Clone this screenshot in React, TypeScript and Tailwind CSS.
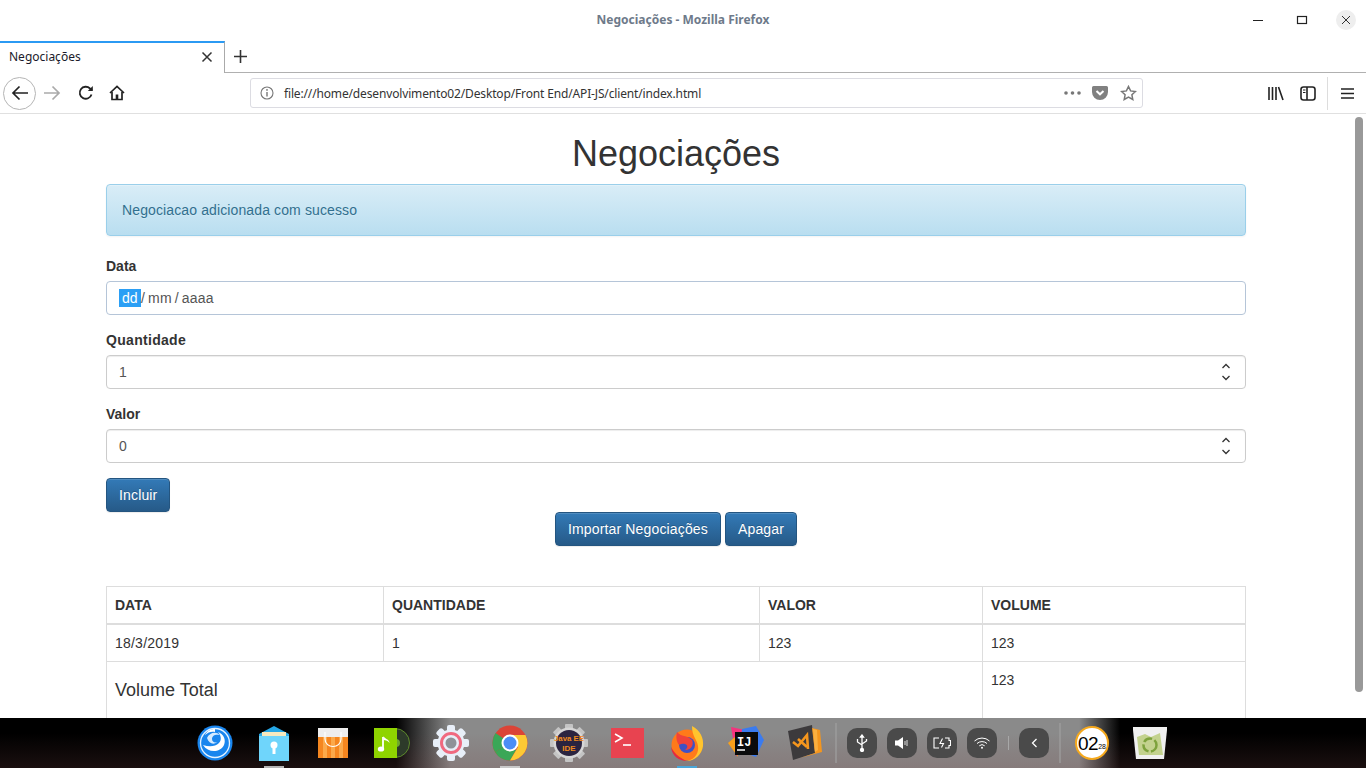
import React from "react";

function Stepper() {
	return (
		<svg width="10" height="18" viewBox="0 0 10 18" className="mr-[2px]" fill="none" stroke="#333" strokeWidth="1.3">
			<path d="M1.5 5l3.5-3.5L8.5 5" />
			<path d="M1.5 13l3.5 3.5L8.5 13" />
		</svg>
	);
}

function NumberField({ label, value, labelClass }: { label: string; value: string; labelClass?: string }) {
	return (
		<div className="mb-[15px]">
			<label className={`block mb-[5px] h-5 leading-5 font-bold text-[#333] ${labelClass ?? ""}`}>{label}</label>
			<div className="flex h-[34px] items-center justify-between rounded-[4px] border border-[#ccc] bg-white pl-3 pr-3 text-[#555] shadow-[inset_0_1px_1px_rgba(0,0,0,0.075)]">
				<span>{value}</span>
				<Stepper />
			</div>
		</div>
	);
}

function BlueButton({ children }: { children: React.ReactNode }) {
	return (
		<button className="h-[34px] rounded-[4px] border border-[#245580] bg-gradient-to-b from-[#337ab7] to-[#265a88] px-3 tracking-[0.15px] text-white [text-shadow:0_-1px_0_rgba(0,0,0,0.2)] shadow-[inset_0_1px_0_rgba(255,255,255,0.15),0_1px_1px_rgba(0,0,0,0.075)]">
			{children}
		</button>
	);
}

function TitleBar() {
	return (
		<div className="relative flex h-[41px] shrink-0 items-center justify-center bg-white font-['Noto_Sans',sans-serif] text-[12px] font-bold text-[#6e7a8a]">
			<span className="-mt-[2px]">Negociações - Mozilla Firefox</span>
			<div className="absolute right-[10px] top-[10px] flex items-center">
				<svg width="12" height="12" viewBox="0 0 12 12" className="mr-[32px]"><path d="M1 6.5h10" stroke="#222" strokeWidth="1" /></svg>
				<svg width="12" height="12" viewBox="0 0 12 12" className="mr-[28px]"><rect x="1.5" y="2.5" width="9" height="7" fill="none" stroke="#222" strokeWidth="1.2" /></svg>
				<div className="flex h-5 w-5 items-center justify-center rounded-full bg-[#eeeeee]">
					<svg width="10" height="10" viewBox="0 0 10 10"><path d="M1 1l8 8M9 1l-8 8" stroke="#333" strokeWidth="1" /></svg>
				</div>
			</div>
		</div>
	);
}

function TabStrip() {
	return (
		<div className="flex h-[32px] shrink-0 bg-white font-['Noto_Sans',sans-serif]">
			<div className="flex h-[32px] w-[225px] items-center justify-between border-r border-[#aaa] border-t-[2px] border-t-[#2b9af3] pb-[2px] pl-[9px] pr-[11px] text-[12px] text-[#1a1a2a] shadow-[0_-1px_0_#aaaaaa]">
				<span>Negociações</span>
				<svg width="12" height="12" viewBox="0 0 12 12"><path d="M1.5 1.5l9 9M10.5 1.5l-9 9" stroke="#333" strokeWidth="1.5" /></svg>
			</div>
			<div className="flex flex-1 items-center border-b border-[#b0b0b0] pb-[1px] pl-[8px]">
				<svg width="15" height="15" viewBox="0 0 15 15"><path d="M7.5 1v13M1 7.5h13" stroke="#333" strokeWidth="1.6" /></svg>
			</div>
		</div>
	);
}

function Toolbar() {
	return (
		<div className="flex h-[41px] shrink-0 items-center border-b border-[#e0e0e0] bg-white pl-[3px] font-['Noto_Sans',sans-serif]">
			<div className="flex h-[33px] w-[33px] items-center justify-center rounded-full border border-[#b5b5b5]">
				<svg width="18" height="16" viewBox="0 0 18 16" fill="none" stroke="#222" strokeWidth="1.7"><path d="M17 8H2M8.5 1.5L2 8l6.5 6.5" /></svg>
			</div>
			<svg width="18" height="16" viewBox="0 0 18 16" fill="none" stroke="#aaa" strokeWidth="1.7" className="ml-[7px]"><path d="M1 8h15M9.5 1.5L16 8l-6.5 6.5" /></svg>
			<svg width="16" height="16" viewBox="0 0 16 16" fill="none" stroke="#222" strokeWidth="1.8" className="ml-[17px]">
				<path d="M13.5 9.5A6 6 0 1 1 12 3.5l2 1.5" />
				<path d="M14.8 1v5h-5" fill="#222" stroke="none" />
			</svg>
			<svg width="16" height="16" viewBox="0 0 16 16" className="ml-[15px]" fill="none" stroke="#222" strokeWidth="1.7">
				<path d="M1 8l7-6.5L15 8" />
				<path d="M3 7v7.5h10V7" />
				<rect x="6.7" y="9.5" width="2.6" height="5" fill="#222" stroke="none" />
			</svg>
			<div className="ml-[125px] flex h-[30px] w-[893px] items-center rounded-[3px] border border-[#dcdce2] pl-[9px] pr-[5px]">
				<svg width="14" height="14" viewBox="0 0 14 14" fill="none"><circle cx="7" cy="7" r="6" stroke="#777" strokeWidth="1.1" /><path d="M7 6v4.5" stroke="#777" strokeWidth="1.4" /><circle cx="7" cy="3.9" r="0.9" fill="#777" /></svg>
				<span className="ml-[10px] flex-1 pt-[1px] text-[12px] tracking-[-0.15px] text-[#333]">file:///home/desenvolvimento02/Desktop/Front End/API-JS/client/index.html</span>
				<svg width="17" height="4" viewBox="0 0 17 4" fill="#777"><circle cx="2" cy="2" r="1.8" /><circle cx="8.5" cy="2" r="1.8" /><circle cx="15" cy="2" r="1.8" /></svg>
				<svg width="16" height="14" viewBox="0 0 16 14" className="ml-[11px]"><path d="M1.5 0h13A1.5 1.5 0 0 1 16 1.5V6a8 8 0 0 1-16 0V1.500A1.500 1.500 0 0 1 1.500 0z" fill="#808080" /><path d="M4.500 5L8 8.300 11.500 5" fill="none" stroke="#fff" strokeWidth="2" /></svg>
				<svg width="17" height="16" viewBox="0 0 17 16" className="ml-[12px]" fill="none" stroke="#777" strokeWidth="1.500"><path d="M8.500 1.500l2.100 4.400 4.800.6-3.500 3.300.9 4.700-4.300-2.300-4.300 2.300.9-4.700L1.600 6.500l4.800-.6z" /></svg>
			</div>
			<svg width="16" height="15" viewBox="0 0 16 15" className="ml-[125px]" fill="none" stroke="#222" strokeWidth="1.600"><path d="M1 1v13M4.500 1v13M8 1v13M10.500 1l4.500 13" /></svg>
			<svg width="16" height="15" viewBox="0 0 16 15" className="ml-[16px]" fill="none" stroke="#222" strokeWidth="1.600">
				<rect x="1" y="1" width="14" height="13" rx="2.500" />
				<path d="M7 1v13" />
				<path d="M3 4h2.500M3 6.500h2.500" strokeWidth="1.200" />
			</svg>
			<div className="ml-[11px] h-[33px] w-px bg-[#dddddd]" />
			<svg width="13" height="13" viewBox="0 0 13 13" className="ml-[13px]" stroke="#222" strokeWidth="1.700"><path d="M0 2h13M0 6.500h13M0 11h13" /></svg>
		</div>
	);
}

function Page() {
	return (
		<div className="flex min-h-0 flex-1 overflow-hidden bg-white font-['Liberation_Sans',Arial,sans-serif] text-[14px] leading-5 text-[#333]">
			<div className="w-[1352px] shrink-0">
				<div className="mx-auto w-[1140px]">
					<h1 className="mb-[10px] mt-[20px] h-[40px] text-center text-[36px] leading-[40px] font-normal">Negociações</h1>
					<div className="mb-5 rounded-[4px] border border-[#9acfea] bg-gradient-to-b from-[#d9edf7] to-[#b9def0] p-[15px] tracking-[0.12px] text-[#31708f] [text-shadow:0_1px_0_rgba(255,255,255,0.2)] shadow-[inset_0_1px_0_rgba(255,255,255,0.25),0_1px_2px_rgba(0,0,0,0.05)]">
						Negociacao adicionada com sucesso
					</div>

					<div className="mb-[15px]">
						<label className="mb-[5px] block h-5 leading-5 font-bold">Data</label>
						<div className="flex h-[34px] items-center rounded-[4px] border border-[#b5c5d8] bg-white pl-3 text-[#555]">
							<span className="flex h-[18px] w-[22px] items-center bg-[#2b9ff5] pl-[3px] text-white">dd</span>
							<span className="tracking-[0.15px] [word-spacing:-1px]">/ mm / aaaa</span>
						</div>
					</div>
					<NumberField label="Quantidade" value="1" labelClass="tracking-[0.3px]" />
					<NumberField label="Valor" value="0" />
					<BlueButton>Incluir</BlueButton>

					<div className="flex justify-center gap-1">
						<BlueButton>Importar Negociações</BlueButton>
						<BlueButton>Apagar</BlueButton>
					</div>

					<table className="mt-[40px] w-[1139px] table-fixed border-collapse border border-[#ddd]">
						<colgroup>
							<col className="w-[277px]" />
							<col className="w-[376px]" />
							<col className="w-[223px]" />
							<col className="w-[263px]" />
						</colgroup>
						<thead>
							<tr className="h-[37px] text-left">
								<th className="border border-b-2 border-[#ddd] px-2 font-bold">DATA</th>
								<th className="border border-b-2 border-[#ddd] px-2 font-bold">QUANTIDADE</th>
								<th className="border border-b-2 border-[#ddd] px-2 font-bold">VALOR</th>
								<th className="border border-b-2 border-[#ddd] px-2 font-bold">VOLUME</th>
							</tr>
						</thead>
						<tbody>
							<tr className="h-[38px]">
								<td className="border border-[#ddd] px-2 tracking-[0.22px]">18/3/2019</td>
								<td className="border border-[#ddd] px-2">1</td>
								<td className="border border-[#ddd] px-2">123</td>
								<td className="border border-[#ddd] px-2">123</td>
							</tr>
							<tr className="h-[57px]">
								<td colSpan={3} className="border border-[#ddd] px-2 text-[18px]">Volume Total</td>
								<td className="border border-[#ddd] px-2 pb-[20px] pt-2 align-top">123</td>
							</tr>
						</tbody>
					</table>
				</div>
			</div>
			<div className="flex w-[14px] shrink-0 flex-col pl-[3px] pt-[3px]">
				<div className="h-[575px] w-[8px] rounded-[4px] bg-[#999]" />
			</div>
		</div>
	);
}

function DockSlot({ children, dot }: { children: React.ReactNode; dot?: string }) {
	return (
		<div className="relative flex h-[50px] w-[59px] shrink-0 items-center justify-center">
			{children}
			{dot && <div className={`absolute bottom-0 left-[20px] h-[2px] w-[20px] ${dot}`} />}
		</div>
	);
}

function TrayButton({ children }: { children: React.ReactNode }) {
	return <div className="flex h-[30px] w-[30px] items-center justify-center rounded-[10px] bg-[#4a4a4a]">{children}</div>;
}

function Dock() {
	return (
		<div className="flex h-[50px] shrink-0 items-center bg-[linear-gradient(180deg,transparent_30%,rgba(120,70,70,0.22)_100%),linear-gradient(90deg,#000_0,#000_29%,#8a8a8a_33%,#8a8a8a_79%,#000_82%,#000_100%)] pl-[185px]">
			<DockSlot>
				<svg width="36" height="36" viewBox="0 0 36 36">
					<circle cx="18" cy="18" r="17.500" fill="#1a86ee" />
					<circle cx="18" cy="18" r="14.500" fill="none" stroke="#e6f3ff" strokeWidth="1.300" />
					<path d="M6 20c5 8 17 8 21 0 2-5 0-11-6-13 3 3 4 8 1 11-4 4-10 4-16 2z" fill="#fff" />
					<path d="M10 13c2-5 9-7 13-3-4-1-8 0-8 4 0 3 3 4 5 3-3 3-8 2-10-4z" fill="#d6ebff" />
					<path d="M18 4c-4 0-8 2-10 6 3-3 7-4 10-3z" fill="#fff" />
				</svg>
			</DockSlot>
			<DockSlot dot="bg-[#b5b5b5]">
				<svg width="30" height="35" viewBox="0 0 30 35">
					<path d="M0 8L15 0l15 8v27H0z" fill="#25a7e6" />
					<path d="M3 6h24v6H3z" fill="#f6e9bf" />
					<path d="M0 10h30v25H0z" fill="#6fd5fb" />
					<circle cx="15" cy="19" r="3.500" fill="#fff" />
					<path d="M13.500 20h3v8h-3z" fill="#fff" />
				</svg>
			</DockSlot>
			<DockSlot>
				<svg width="30" height="30" viewBox="0 0 30 30">
					<rect width="30" height="30" fill="#f5861f" />
					<rect width="30" height="9" fill="#eeeeee" />
					<path d="M5 9h4v21H5zM13 9h4v21h-4zM21 9h4v21h-4z" fill="#fba94a" />
					<path d="M7 4v7c0 10 16 10 16 0V4" fill="none" stroke="#fff" strokeWidth="1.200" />
				</svg>
			</DockSlot>
			<DockSlot>
				<svg width="36" height="30" viewBox="0 0 36 30">
					<circle cx="21" cy="15" r="14.500" fill="#2d3a2a" stroke="#5d8a2c" />
					<circle cx="22" cy="15" r="4" fill="#6da82c" />
					<rect width="23" height="30" fill="#8fd400" />
					<path d="M9 9v12" stroke="#fff" strokeWidth="1.800" />
					<ellipse cx="7" cy="21" rx="3.200" ry="2.600" fill="#fff" />
					<path d="M9.500 8c1 3 6 3 6 7-1-2-4-3-6-3z" fill="#fff" />
				</svg>
			</DockSlot>
			<DockSlot>
				<svg width="36" height="36" viewBox="0 0 36 36">
					<circle cx="18" cy="18" r="13.500" fill="#e8eff8" />
					<g fill="#e8eff8">
						<rect x="14" y="0" width="8" height="36" rx="2" />
						<rect x="14" y="0" width="8" height="36" rx="2" transform="rotate(45 18 18)" />
						<rect x="14" y="0" width="8" height="36" rx="2" transform="rotate(90 18 18)" />
						<rect x="14" y="0" width="8" height="36" rx="2" transform="rotate(135 18 18)" />
					</g>
					<circle cx="18" cy="18" r="9.500" fill="#e8eff8" stroke="#f0697f" strokeWidth="3" />
					<circle cx="18" cy="18" r="5.500" fill="#8f9298" />
				</svg>
			</DockSlot>
			<DockSlot dot="bg-[#c9c9c9]">
				<svg width="36" height="36" viewBox="0 0 36 36">
					<circle cx="18" cy="18" r="17.500" fill="#db4437" />
					<path d="M18 18L3 27A17.500 17.500 0 0 1 3.500 8z" fill="#3aa757" />
					<path d="M18 35.500A17.500 17.500 0 0 1 3 27l8-5 7 0 6 3z" fill="#3aa757" />
					<path d="M18 10h15.500a17.500 17.500 0 0 1-15.500 25.500L26 22z" fill="#fcc934" />
					<circle cx="18" cy="18" r="8.500" fill="#fff" />
					<circle cx="18" cy="18" r="6.500" fill="#4c8df6" />
				</svg>
			</DockSlot>
			<DockSlot>
				<svg width="38" height="38" viewBox="0 0 38 38">
					<g fill="#c4c4c4">
						<rect x="15" y="0" width="8" height="38" rx="1" />
						<rect x="15" y="0" width="8" height="38" rx="1" transform="rotate(45 19 19)" />
						<rect x="15" y="0" width="8" height="38" rx="1" transform="rotate(90 19 19)" />
						<rect x="15" y="0" width="8" height="38" rx="1" transform="rotate(135 19 19)" />
					</g>
					<circle cx="19" cy="19" r="15.500" fill="#d6d6d6" />
					<circle cx="19" cy="19" r="13" fill="#2b2440" />
					<text x="19" y="17" textAnchor="middle" fontSize="7.500" fontWeight="700" fill="#f08a1d" fontFamily="Liberation Sans" textLength="30" lengthAdjust="spacingAndGlyphs">Java EE</text>
					<text x="19" y="27" textAnchor="middle" fontSize="8" fontWeight="700" fill="#f08a1d" fontFamily="Liberation Sans">IDE</text>
				</svg>
			</DockSlot>
			<DockSlot>
				<svg width="33" height="30" viewBox="0 0 33 30">
					<rect width="33" height="30" fill="#e84350" />
					<path d="M4 6l7 4-7 4" fill="none" stroke="#fff" strokeWidth="1.600" />
					<path d="M12 17h8" stroke="#fff" strokeWidth="1.600" />
				</svg>
			</DockSlot>
			<DockSlot dot="bg-[#4aa6d8]">
				<svg width="34" height="36" viewBox="0 0 34 36">
					<circle cx="17" cy="20" r="15.500" fill="#ff7a1a" />
					<path d="M22 1c8 4 12 12 11 20-1 8-8 15-16 15 9-2 12-9 11-15-1-7-6-9-6-20z" fill="#ffc42e" />
					<circle cx="17" cy="20" r="8" fill="#3f51c5" />
					<path d="M7 7c4 5 10 3 15 8 2 4 0 10-7 10 3-2 3-5 0-6-4-1-6 1-6 1-3-4-3-9-2-13z" fill="#f0433a" />
					<path d="M1 22c1 9 8 14 16 14-5-2-12-6-16-14z" fill="#e62a3d" />
				</svg>
			</DockSlot>
			<DockSlot>
				<svg width="36" height="36" viewBox="0 0 36 36">
					<path d="M3 2l14 3 5 16-14 10z" fill="#f5337e" />
					<path d="M14 4l14-3 8 14-8 17-16-6z" fill="#3a7bf0" />
					<path d="M0 18l7-6 3 20z" fill="#f9a01b" />
					<rect x="7" y="7" width="23" height="23" fill="#0b0b0b" />
					<text x="9" y="21" fontSize="12" fontWeight="700" fill="#fff" fontFamily="Liberation Mono">IJ</text>
					<path d="M9 25h8" stroke="#fff" strokeWidth="1.500" />
				</svg>
			</DockSlot>
			<DockSlot>
				<svg width="34" height="36" viewBox="0 0 34 36">
					<path d="M0 6L24 0l3 28L5 35z" fill="#3c3a3c" />
					<path d="M24 3l8 2 2 22-22 6 15-5z" fill="#f5961d" />
					<path d="M25 4l4 1 1 20-3 2z" fill="#fbb040" />
					<path d="M5 17l5 4 9-11 1 14" fill="none" stroke="#f5961d" strokeWidth="2.600" />
					<path d="M10 14l9 8" fill="none" stroke="#f5961d" strokeWidth="2.600" />
				</svg>
			</DockSlot>

			<div className="ml-[1px] h-[40px] w-[2px] bg-[#a0a0a0]/60" />
			<div className="ml-[10px] flex items-center gap-[10px]">
				<TrayButton>
					<svg width="12" height="18" viewBox="0 0 12 18" fill="none" stroke="#fff" strokeWidth="1.300"><path d="M6 1v16M1.500 5v3l4.500 3M10.500 5v2L6 10" /><circle cx="6" cy="16" r="1.500" fill="#fff" /><path d="M4.500 3L6 1l1.500 2z" fill="#fff" /></svg>
				</TrayButton>
				<TrayButton>
					<svg width="14" height="14" viewBox="0 0 14 14"><path d="M0 4.500h3L8 1v12L3 9.500H0z" fill="#fff" /><path d="M10 5v4M12 4v6" stroke="#ddd" strokeWidth="1" /></svg>
				</TrayButton>
				<TrayButton>
					<svg width="18" height="12" viewBox="0 0 18 12" fill="none" stroke="#fff" strokeWidth="1.100"><path d="M6 1H1v10h5M12 1h4v2.500h1.500v5H16V11h-4" /><path d="M9.500 1.500L7 6.500h3.500L8.500 10.500" /></svg>
				</TrayButton>
				<TrayButton>
					<svg width="16" height="12" viewBox="0 0 16 12" fill="none" stroke="#fff" strokeWidth="1"><path d="M0.500 4a11 11 0 0 1 15 0M3 6.500a7.500 7.500 0 0 1 10 0M5.300 8.800a4 4 0 0 1 5.400 0" /><circle cx="8" cy="10.800" r="1" fill="#fff" stroke="none" /></svg>
				</TrayButton>
			</div>
			<div className="ml-[11px] h-[14px] w-px bg-[#a8a8a8]" />
			<div className="ml-[10px]">
				<TrayButton>
					<svg width="7" height="10" viewBox="0 0 7 10" fill="none" stroke="#fff" strokeWidth="1.300"><path d="M5.500 1L1.500 5l4 4" /></svg>
				</TrayButton>
			</div>
			<div className="ml-[10px] h-[40px] w-[2px] bg-[#a0a0a0]/60" />
			<div className="ml-[14px] flex h-[34px] w-[34px] items-center justify-center rounded-full border-[2px] border-[#f5a81c] bg-white font-['Liberation_Sans',sans-serif] text-black">
				<span className="text-[19px] leading-none tracking-[-0.5px]">02</span>
				<span className="mt-[7px] text-[7px] leading-none">28</span>
			</div>
			<svg width="34" height="32" viewBox="0 0 34 32" className="ml-[24px]">
				<path d="M0 0h34v3l-3 29H3L0 3z" fill="#f0f0f0" />
				<path d="M4 10l8-3 6 3 9-4 3 22H6z" fill="#c3d28e" />
				<circle cx="17" cy="18" r="6.500" fill="none" stroke="#7da23c" strokeWidth="2.500" strokeDasharray="9 2.500" />
			</svg>
		</div>
	);
}

export default function App() {
	return (
		<div className="flex h-[768px] w-[1366px] flex-col overflow-hidden bg-white">
			<TitleBar />
			<TabStrip />
			<Toolbar />
			<Page />
			<Dock />
		</div>
	);
}
